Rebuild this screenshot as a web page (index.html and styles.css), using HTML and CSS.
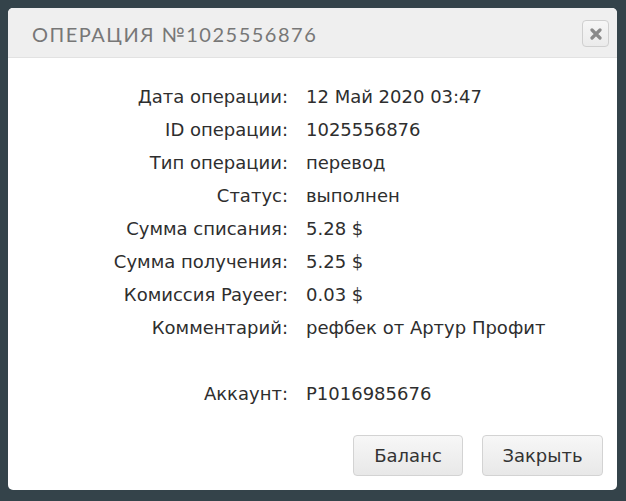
FILE: index.html
```html
<!DOCTYPE html>
<html lang="ru">
<head>
<meta charset="utf-8">
<link rel="stylesheet" href="styles.css">
</head>
<body>
<div class="dialog">
  <div class="dialog-header">
    <span class="dialog-title">ОПЕРАЦИЯ №1025556876</span>
    <button class="close-btn" aria-label="close">
      <svg width="12" height="12" viewBox="0 0 12 12"><path d="M2 2 L10 10 M10 2 L2 10" stroke="#8a8a8a" stroke-width="3.2" stroke-linecap="round"/></svg>
    </button>
  </div>
  <div class="dialog-body">
    <div class="info">
      <div class="label">Дата операции:</div><div class="value">12 Май 2020 03:47</div>
      <div class="label">ID операции:</div><div class="value">1025556876</div>
      <div class="label">Тип операции:</div><div class="value">перевод</div>
      <div class="label">Статус:</div><div class="value">выполнен</div>
      <div class="label">Сумма списания:</div><div class="value">5.28 $</div>
      <div class="label">Сумма получения:</div><div class="value">5.25 $</div>
      <div class="label">Комиссия Payeer:</div><div class="value">0.03 $</div>
      <div class="label">Комментарий:</div><div class="value">рефбек от Артур Профит</div>
      <div class="label spacer"></div><div class="value spacer"></div>
      <div class="label">Аккаунт:</div><div class="value">P1016985676</div>
    </div>
  </div>
  <div class="dialog-footer">
    <button class="btn">Баланс</button>
    <button class="btn btn-wide">Закрыть</button>
  </div>
</div>
</body>
</html>
```

FILE: styles.css
```css
html, body {
  margin: 0;
  padding: 0;
}
body {
  background: #34434a;
  width: 626px;
  height: 501px;
  padding: 8px 9px 11px 8px;
  box-sizing: border-box;
  font-family: "DejaVu Sans", sans-serif;
}
.dialog {
  width: 609px;
  height: 482px;
  background: #fff;
  border-radius: 5px;
  overflow: hidden;
  display: flex;
  flex-direction: column;
}
.dialog-header {
  height: 50px;
  background: #efefef;
  border-bottom: 1px solid #e2e2e2;
  display: flex;
  align-items: center;
  justify-content: space-between;
  padding: 0 8px 0 24px;
  box-sizing: border-box;
  flex-shrink: 0;
}
.dialog-title {
  font-family: Lato, sans-serif;
  font-size: 20px;
  letter-spacing: 1.5px;
  color: #777;
  padding-top: 2px;
}
.close-btn {
  width: 27px;
  height: 27px;
  border: 1px solid #cfcfcf;
  border-radius: 4px;
  background: linear-gradient(#f6f6f6, #ebebeb);
  display: flex;
  align-items: center;
  justify-content: center;
  padding: 0;
  margin-top: 2px;
}
.dialog-body {
  flex: 1;
  padding-top: 22px;
}
.info {
  display: grid;
  grid-template-columns: 280px auto;
  column-gap: 18px;
  grid-auto-rows: 33px;
  align-items: center;
  font-size: 18px;
  color: #2e2e2e;
}
.label {
  text-align: right;
}
.dialog-footer {
  display: flex;
  justify-content: flex-end;
  gap: 19px;
  padding: 0 14px 14px 0;
}
.btn {
  width: 110px;
  height: 41px;
  border: 1px solid #d3d3d3;
  border-radius: 4px;
  background: linear-gradient(#f7f7f7, #e8e8e8);
  font-family: "DejaVu Sans", sans-serif;
  font-size: 18px;
  color: #333;
  padding: 0;
}
.btn-wide {
  width: 121px;
}
```
